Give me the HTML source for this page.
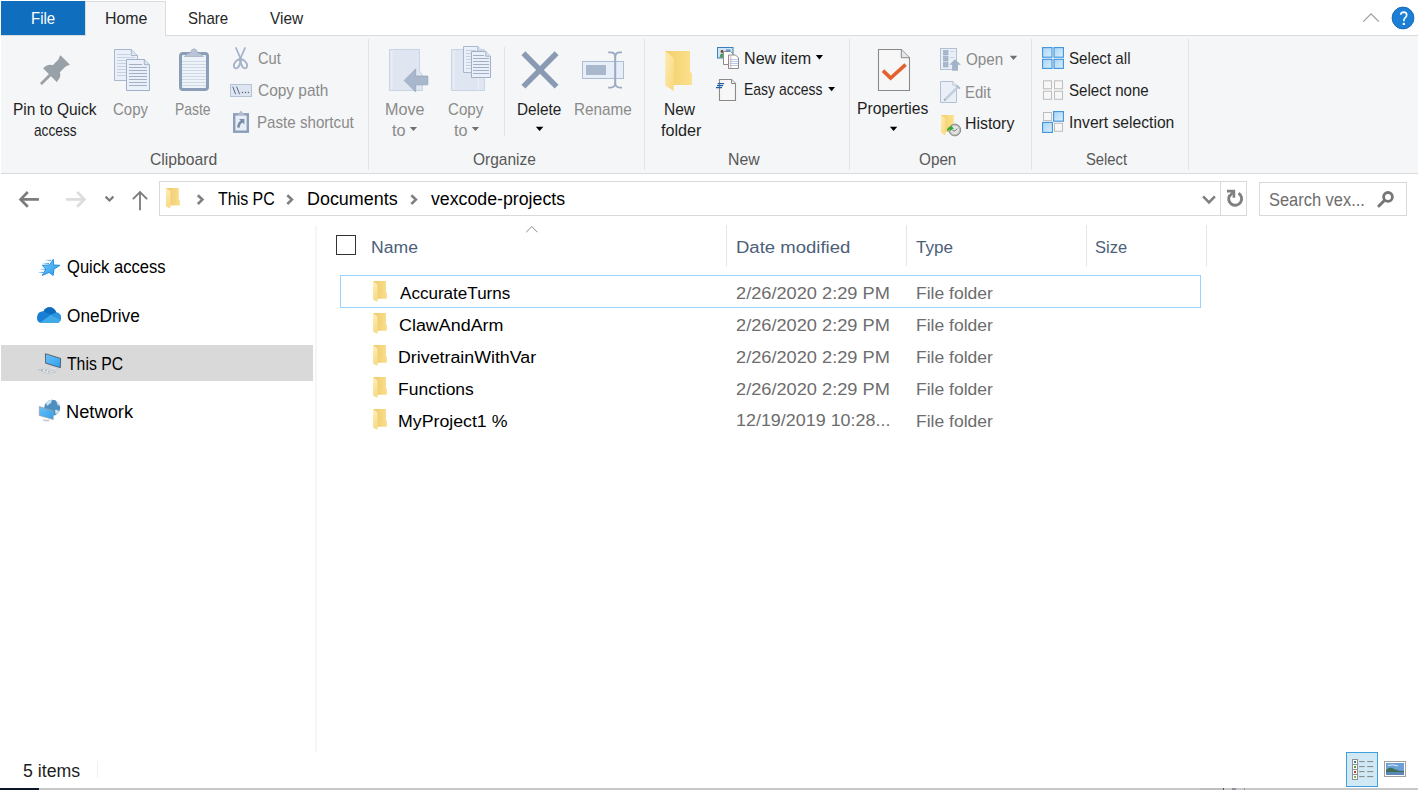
<!DOCTYPE html>
<html><head><meta charset="utf-8"><style>
html,body{margin:0;padding:0;width:1418px;height:790px;overflow:hidden;background:#fff;position:relative;font-family:"Liberation Sans",sans-serif}
.t{position:absolute;white-space:pre;line-height:24px;transform-origin:0 0}
.a{position:absolute}
svg{position:absolute;overflow:visible}
</style></head><body>
<!-- tab row -->
<div class="a" style="left:1px;top:1px;width:84px;height:34px;background:#106ebe"></div>
<div class="a" style="left:85px;top:1px;width:81px;height:35px;background:#f5f6f7;border:1px solid #dadbdc;border-bottom:none;box-sizing:border-box"></div>
<!-- ribbon -->
<div class="a" style="left:1px;top:35px;width:1417px;height:139px;background:#f5f6f7;border-top:1px solid #dadbdc;border-bottom:1px solid #dadbdc;box-sizing:border-box"></div>
<div class="a" style="left:86px;top:35px;width:79px;height:1px;background:#f5f6f7"></div>
<!-- group dividers -->
<div class="a" style="left:368px;top:39px;width:1px;height:131px;background:#e2e3e4"></div>
<div class="a" style="left:644px;top:39px;width:1px;height:131px;background:#e2e3e4"></div>
<div class="a" style="left:849px;top:39px;width:1px;height:131px;background:#e2e3e4"></div>
<div class="a" style="left:1031px;top:39px;width:1px;height:131px;background:#e2e3e4"></div>
<div class="a" style="left:1188px;top:39px;width:1px;height:131px;background:#e2e3e4"></div>
<div class="a" style="left:504px;top:47px;width:1px;height:89px;background:#e2e3e4"></div>
<!-- address bar -->
<div class="a" style="left:159px;top:181px;width:1088px;height:35px;border:1px solid #d9d9d9;box-sizing:border-box"></div>
<div class="a" style="left:1220px;top:182px;width:1px;height:33px;background:#d9d9d9"></div>
<div class="a" style="left:1259px;top:182px;width:148px;height:34px;border:1px solid #d9d9d9;box-sizing:border-box"></div>
<!-- nav -->
<div class="a" style="left:1px;top:345px;width:312px;height:36px;background:#d9d9d9"></div>
<div class="a" style="left:315px;top:225px;width:2px;height:527px;background:#f6f6f6"></div>
<!-- content -->
<div class="a" style="left:336px;top:235px;width:20px;height:20px;border:1.5px solid #333;box-sizing:border-box"></div>
<div class="a" style="left:726px;top:225px;width:1px;height:41px;background:#e5e5e5"></div>
<div class="a" style="left:906px;top:225px;width:1px;height:41px;background:#e5e5e5"></div>
<div class="a" style="left:1086px;top:225px;width:1px;height:41px;background:#e5e5e5"></div>
<div class="a" style="left:1206px;top:225px;width:1px;height:41px;background:#e5e5e5"></div>
<div class="a" style="left:340px;top:275px;width:861px;height:33px;border:1px solid #99d1ff;box-sizing:border-box"></div>
<!-- status -->
<div class="a" style="left:97px;top:761px;width:1px;height:17px;background:#f0f0f0"></div>
<div class="a" style="left:1346px;top:752px;width:32px;height:35px;background:#d1e8f5;border:1px solid #3ea0dd;box-sizing:border-box"></div>
<div class="a" style="left:1384px;top:761px;width:22px;height:16px;border:1px solid #a0a0a0;box-sizing:border-box;background:#fff"></div>
<div class="a" style="left:0;top:788px;width:1418px;height:2px;background:#c8c8c8"></div>
<div class="a" style="left:0;top:788px;width:39px;height:2px;background:#0b1628"></div>
<svg width="1418" height="790" viewBox="0 0 1418 790" style="left:0;top:0">
<defs>
 <linearGradient id="fold" x1="0" y1="0" x2="1" y2="0">
  <stop offset="0" stop-color="#f2cf6c"/><stop offset="1" stop-color="#fbe08c"/>
 </linearGradient>
 <linearGradient id="flap" x1="0" y1="0" x2="1" y2="1">
  <stop offset="0" stop-color="#feebb0"/><stop offset="1" stop-color="#f8d97f"/>
 </linearGradient>
 <linearGradient id="selb" x1="0" y1="0" x2="1" y2="1">
  <stop offset="0" stop-color="#a9d5f7"/><stop offset="1" stop-color="#d9eefc"/>
 </linearGradient>
</defs>
<!-- help button -->
<circle cx="1403" cy="18" r="10.9" fill="#1b7fd6" stroke="#1465b0" stroke-width="0.9"/>
<path d="M1400.7 14.8 Q1400.9 12.1 1403.8 12.1 Q1406.7 12.2 1406.7 14.9 Q1406.7 16.7 1405 17.8 Q1403.8 18.7 1403.8 21.2" fill="none" stroke="#fff" stroke-width="1.6"/>
<rect x="1402.7" y="22.9" width="2.2" height="2.1" fill="#fff"/>
<!-- collapse chevron -->
<path d="M1363.3 21.6 L1371 13.8 L1378.8 21.6" fill="none" stroke="#999" stroke-width="1.15"/>

<!-- pin -->
<g transform="translate(49.9 75.1) rotate(45)" fill="#99a1a8">
 <path d="M-9.67 0 L9.67 0 C9.67 -3.5 8.6 -7.6 5 -9 L5 -16.8 C5.6 -19 6.6 -20 6.6 -21.5 L-6.6 -21.5 C-6.6 -20 -5.6 -19 -5 -16.8 L-5 -9 C-8.6 -7.6 -9.67 -3.5 -9.67 0 Z"/>
 <path d="M-1.5 -0.5 L1.5 -0.5 L1.4 12.2 Q0 13.8 -1.4 12.2 Z"/>
</g>

<!-- copy (clipboard group) -->
<g>
 <path d="M114.5 49.5 H131.3 L137.5 55.5 V80.5 H114.5 Z" fill="#eaf0f9" stroke="#a9b7cc"/>
 <path d="M131.3 49.5 V55.5 H137.5" fill="#dde4ee" stroke="#a9b7cc"/>
 <g stroke="#c7d1df" stroke-width="1">
  <path d="M117 54.5H130 M117 57.5H135 M117 60.5H135 M117 63.5H135 M117 66.5H135 M117 69.5H135 M117 72.5H135 M117 75.5H135"/>
 </g>
 <path d="M126.5 59.5 H144.3 L149.5 64.7 V90.5 H126.5 Z" fill="#eaf0f9" stroke="#a1b0c6"/>
 <path d="M144.3 59.5 V64.7 H149.5" fill="#dde4ee" stroke="#a1b0c6"/>
 <g stroke="#a3b0c4" stroke-width="1">
  <path d="M129 64.5H142 M129 67.5H147 M129 70.5H147 M129 73.5H147 M129 76.5H147 M129 79.5H147 M129 82.5H147 M129 85.5H147"/>
 </g>
</g>
<!-- paste -->
<g>
 <rect x="180.5" y="53.5" width="27" height="36" rx="2.5" fill="#eef2f9" stroke="#8c9db7" stroke-width="3"/>
 <g stroke="#cfd8e5" stroke-width="1">
  <path d="M182 61.5H206 M182 64.5H206 M182 67.5H206 M182 70.5H206 M182 73.5H206 M182 76.5H206 M182 79.5H206 M182 82.5H206 M182 85.5H206"/>
 </g>
 <path d="M184.5 56.5 Q186 54 190.5 53 L191.5 50 Q194 47.5 196.5 50 L197.5 53 Q202 54 203.5 56.5 Z" fill="#b9c5d6" stroke="#a3b2c7" stroke-width="0.8"/>
</g>
<!-- scissors -->
<g fill="none" stroke="#a4b3ca" stroke-width="1.8" stroke-linecap="round">
 <path d="M236 48 L240.8 59"/>
 <path d="M245 48 L240.2 59"/>
 <path d="M240.4 59 C236.5 59.8 233.6 62.8 233.9 66.3 C234.2 68.6 236.8 69 238.3 67.2 C239.9 65.2 240.6 62 240.4 59 Z"/>
 <path d="M240.6 59 C244.5 59.8 247.4 62.8 247.1 66.3 C246.8 68.6 244.2 69 242.7 67.2 C241.1 65.2 240.4 62 240.6 59 Z"/>
</g>
<!-- copy path -->
<g>
 <rect x="230.5" y="84.5" width="21" height="12" fill="#dde5f0" stroke="#b6c3d6"/>
 <path d="M232.8 86.6 L235.6 94.2 M236.6 86.6 L239.6 94.2" stroke="#56698a" stroke-width="1"/>
 <rect x="241.8" y="91.8" width="1.3" height="1.3" fill="#56698a"/>
 <rect x="244.8" y="91.8" width="1.3" height="1.3" fill="#56698a"/>
 <rect x="247.8" y="91.8" width="1.3" height="1.3" fill="#56698a"/>
</g>
<!-- paste shortcut -->
<g>
 <rect x="234.2" y="114.3" width="13.6" height="17.4" fill="#e8eef7" stroke="#8c9db7" stroke-width="2.4"/>
 <path d="M237.5 115 L241 110.5 L244.5 115 Z" fill="#b0bdd0"/>
 <path d="M239 119 H244.4 V124.4 Z" fill="#7b8ea9"/><path d="M242.3 121.3 Q238.6 123 238.4 127.6" fill="none" stroke="#7b8ea9" stroke-width="2.6"/>
</g>

<!-- move to -->
<g>
 <path d="M389.5 49.5 H419.5 V71.5 L422.5 74.5 V90.5 H389.5 Z" fill="#dfe6f1" stroke="#c9d4e4"/>
 <path d="M391.8 51 V89.5" stroke="#eef2f8" stroke-width="1"/>
 <path d="M404.2 80.4 L415.7 69 V76.1 H427.8 V84.8 H415.7 V92 Z" fill="#a9b7cc" stroke="#94a5be" stroke-width="0.8"/>
</g>
<!-- copy to -->
<g>
 <path d="M451.5 49.5 H484.5 V90.5 H451.5 Z" fill="#dfe6f1" stroke="#c9d4e4"/>
 <path d="M453.8 51 V89.5 M478.3 72 V89.5" stroke="#eef2f8" stroke-width="1"/>
 <path d="M463.5 46.5 H477.8 L482.5 51.2 V72.5 H463.5 Z" fill="#eaf0f9" stroke="#a9b7cc"/><path d="M477.8 46.5 V51.2 H482.5" fill="#dde4ee" stroke="#a9b7cc"/>
 <g stroke="#c7d1df"><path d="M466 50.5H476 M466 53.5H480 M466 56.5H480 M466 59.5H480 M466 62.5H480 M466 65.5H480 M466 68.5H480"/></g>
 <path d="M471.5 51.5 H485.8 L490.5 56.2 V77.5 H471.5 Z" fill="#eaf0f9" stroke="#a1b0c6"/>
 <path d="M485.8 51.5 V56.2 H490.5" fill="#dde4ee" stroke="#a1b0c6"/>
 <g stroke="#a3b0c4"><path d="M473 55.5H484 M473 58.5H489 M473 61.5H489 M473 64.5H489 M473 67.5H489 M473 70.5H489 M473 73.5H489"/></g>
</g>
<!-- delete X -->
<path d="M523.4 53.2 L556.6 86.6 M556.6 53.2 L523.4 86.6" stroke="#8a9ab3" stroke-width="5.5"/>
<!-- rename -->
<g>
 <rect x="582.5" y="61.5" width="41" height="17" fill="#e8eef8" stroke="#adbdd3"/>
 <rect x="586" y="65" width="20" height="10" fill="#a9b8cd"/>
 <path d="M615.2 54 V86" stroke="#9aaac2" stroke-width="2"/>
 <path d="M608.2 52.4 H610.5 Q615.2 52.4 615.2 57 Q615.2 52.4 620 52.4 H622" fill="none" stroke="#9aaac2" stroke-width="1.6"/>
 <path d="M608.2 87.6 H610.5 Q615.2 87.6 615.2 83 Q615.2 87.6 620 87.6 H622" fill="none" stroke="#9aaac2" stroke-width="1.6"/>
</g>
<!-- dropdown arrows -->
<path d="M409.8 126.9 H417.1 L413.45 131 Z" fill="#707070"/>
<path d="M471.8 126.9 H479.1 L475.45 131 Z" fill="#707070"/>
<path d="M535.8 126.8 H543.4 L539.6 131 Z" fill="#000"/>
<path d="M815.8 55 H823 L819.4 59.4 Z" fill="#000"/>
<path d="M828.2 87 H835 L831.6 91.2 Z" fill="#000"/>
<path d="M889.9 126.8 H897.3 L893.6 131.1 Z" fill="#000"/>
<path d="M1009.8 55.8 H1017.2 L1013.5 60.1 Z" fill="#707070"/>

<!-- new folder -->
<g>
 <path d="M665.2 51 H690 V71.7 L691.9 73.5 V85 H672.5 Z" fill="url(#fold)"/>
 <path d="M665.2 51 L673.7 57.7 V91.1 L665.2 85.4 Z" fill="url(#flap)"/>
</g>
<!-- new item -->
<g>
 <rect x="717.5" y="47.5" width="15.5" height="10.5" fill="#cfe4f6" stroke="#3d7fb8" stroke-width="1"/>
 <circle cx="722" cy="51.5" r="1.4" fill="#6b4a2a"/>
 <path d="M719.6 57.5 Q720 53.5 722 53.5 Q724 53.5 724.4 57.5 Z" fill="#4a9a5a"/>
 <path d="M726 50.2 H730.5" stroke="#3d7fb8" stroke-width="1.2"/>
 <path d="M723.5 51.5 H730.5 L733 54 V64.5 H723.5 Z" fill="#fff" stroke="#8c8c8c"/>
 <path d="M728.5 55 H735.5 L738.5 58 V68.5 H728.5 Z" fill="#fff" stroke="#8c8c8c"/>
 <path d="M729.5 59.5H738 M729.5 61.5H738 M729.5 63.5H738 M729.5 65.5H738" stroke="#a9c6e6" stroke-width="0.9"/>
 <path d="M730.8 55.5 V68" stroke="#e79a9a" stroke-width="0.8"/>
</g>
<!-- easy access -->
<g>
 <path d="M719.5 79.5 H731.5 L735.5 83.5 V100.5 H719.5 Z" fill="#f7f7f7" stroke="#8a8a8a" stroke-width="1.1"/>
 <path d="M731.5 79.5 V83.5 H735.5" fill="#e8e8e8" stroke="#8a8a8a" stroke-width="1"/>
 <path d="M717.7 83.6 H724 M717 85.6 H723 M716 87.6 H722" stroke="#1d5fa8" stroke-width="1.1"/>
</g>
<!-- properties -->
<g>
 <path d="M878.5 49.5 H901.3 L909.5 57.7 V90.5 H878.5 Z" fill="#f7f7f7" stroke="#8a8a8a" stroke-width="1.1"/>
 <path d="M901.3 49.5 V57.7 H909.5" fill="#e6e6e6" stroke="#8a8a8a" stroke-width="1"/>
 <path d="M883 70.6 L890.6 78 L905.6 64.6" fill="none" stroke="#e2612c" stroke-width="3.6"/>
</g>
<!-- open -->
<g>
 <rect x="940.5" y="48.5" width="16" height="21" fill="#e9eef7" stroke="#b3c0d4"/>
 <rect x="943.5" y="50.5" width="4.5" height="4.5" fill="#a9b7cc" stroke="#98a8bf" stroke-width="0.6"/>
 <rect x="943.5" y="56.5" width="4.5" height="4.5" fill="#a9b7cc" stroke="#98a8bf" stroke-width="0.6"/>
 <rect x="943.5" y="62.5" width="4.5" height="4.5" fill="#a9b7cc" stroke="#98a8bf" stroke-width="0.6"/>
 <path d="M950 51.5H954.6 M950 57.5H954.6" stroke="#c9d3e2" stroke-width="0.9"/>
 <path d="M955 59.2 L960.9 64.7 H958 V70.7 H952.1 V64.7 H949.3 Z" fill="#a3b2c8"/>
</g>
<!-- edit -->
<g>
 <path d="M940.5 81.5 H952.9 L956.5 85.1 V102.5 H940.5 Z" fill="#e9eef7" stroke="#b3c0d4"/>
 <path d="M952.9 81.5 V85.1 H956.5" fill="#f4f7fb" stroke="#b3c0d4"/>
 <path d="M944.6 100.1 L958.2 86.6" stroke="#c3cddb" stroke-width="2.6"/>
 <path d="M956.6 85.4 L960 88.6" stroke="#a9b6c9" stroke-width="1.6"/>
 <path d="M943.8 100.9 L944.6 98.8 L945.8 100 Z" fill="#8a98ad"/>
</g>
<!-- history -->
<g>
 <path d="M941 115 H953.8 V132 H941 Z" fill="url(#fold)"/>
 <path d="M941 115 L945.4 118.2 V135.4 L941 132.4 Z" fill="url(#flap)"/>
 <circle cx="954.8" cy="130" r="5.9" fill="#bdbdbd" stroke="#8c8c8c" stroke-width="1"/>
 <circle cx="954.8" cy="130" r="4.2" fill="#e4e4e4"/>
 <path d="M952.6 130.6 L954.8 131 L957.2 128.6" fill="none" stroke="#555" stroke-width="0.8"/>
 <path d="M947 129.2 Q948.4 126.6 951 126.8 L950.6 125.2 L953.8 128.4 L950 131 L950.4 129.3 Q948.8 129.2 947.4 131.5 Z" fill="#2fa62f"/>
</g>
<!-- select all -->
<g stroke="#3d93dd" stroke-width="1.1" fill="url(#selb)">
 <rect x="1042.6" y="47.6" width="9.4" height="9.6"/>
 <rect x="1054" y="47.6" width="9.4" height="9.6"/>
 <rect x="1042.6" y="59.3" width="9.4" height="9.1"/>
 <rect x="1054" y="59.3" width="9.4" height="9.1"/>
</g>
<!-- select none -->
<g stroke="#bdbdbd" stroke-width="1" fill="#f7f7f7">
 <rect x="1043.5" y="80.8" width="8" height="8"/>
 <rect x="1054.5" y="80.8" width="8" height="8"/>
 <rect x="1043.5" y="91.3" width="8" height="8"/>
 <rect x="1054.5" y="91.3" width="8" height="8"/>
</g>
<!-- invert selection -->
<g>
 <rect x="1043.5" y="112.5" width="8" height="8" fill="#f7f7f7" stroke="#bdbdbd"/>
 <rect x="1054.5" y="123.3" width="8" height="8" fill="#f7f7f7" stroke="#bdbdbd"/>
 <rect x="1053.6" y="111.6" width="9.8" height="9.6" fill="url(#selb)" stroke="#3d93dd" stroke-width="1.1"/>
 <rect x="1042.6" y="122.4" width="9.8" height="10" fill="url(#selb)" stroke="#3d93dd" stroke-width="1.1"/>
</g>
</svg>
<svg width="1418" height="790" viewBox="0 0 1418 790" style="left:0;top:0">
<defs>
 <linearGradient id="fb" x1="0" y1="0" x2="1" y2="0">
  <stop offset="0" stop-color="#efc96a"/><stop offset="1" stop-color="#f9de8e"/>
 </linearGradient>
 <linearGradient id="ff" x1="0" y1="0" x2="0" y2="1">
  <stop offset="0" stop-color="#feecb4"/><stop offset="1" stop-color="#f7da86"/>
 </linearGradient>
 <symbol id="fold16" viewBox="0 0 14 21">
  <path d="M0 0 H12.8 V11.1 L13.8 12 V17.6 H3.9 Z" fill="url(#fb)"/>
  <path d="M0 0 L4.4 3.3 V20.6 L0 18.6 Z" fill="url(#ff)"/>
 </symbol>
 <linearGradient id="star" x1="0" y1="0" x2="1" y2="1">
  <stop offset="0" stop-color="#6cc6fa"/><stop offset="1" stop-color="#2e9be9"/>
 </linearGradient>
 <linearGradient id="speed" x1="0" y1="0" x2="1" y2="0">
  <stop offset="0" stop-color="#3a9ae6" stop-opacity="0"/><stop offset="1" stop-color="#3a9ae6" stop-opacity="1"/>
 </linearGradient>
 <linearGradient id="scr" x1="0" y1="0" x2="1" y2="1">
  <stop offset="0" stop-color="#6cc0f7"/><stop offset="1" stop-color="#2fa0ee"/>
 </linearGradient>
</defs>
<!-- back / forward -->
<g fill="none" stroke="#7b7b7b" stroke-width="2.7">
 <path d="M21.2 199.4 H38.9"/>
 <path d="M27.8 192 L20.6 199.4 L27.8 206.8"/>
</g>
<g fill="none" stroke="#dcdcdc" stroke-width="2.7">
 <path d="M66 199.4 H83.7"/>
 <path d="M77.2 192 L84.4 199.4 L77.2 206.8"/>
</g>
<path d="M105.6 196.6 L109.5 200.5 L113.4 196.6" fill="none" stroke="#7b7b7b" stroke-width="2.2"/>
<g fill="none" stroke="#7b7b7b" stroke-width="1.8">
 <path d="M140 192 V210.2"/>
 <path d="M132.9 199.1 L140 192 L147.1 199.1"/>
</g>
<!-- address folder -->
<use href="#fold16" x="166" y="188" width="14" height="21"/>
<!-- breadcrumb chevrons -->
<g fill="none" stroke="#808080" stroke-width="2.6">
 <path d="M197.8 195.2 L202.4 199.6 L197.8 204"/>
 <path d="M287.3 195.2 L291.9 199.6 L287.3 204"/>
 <path d="M411.3 195.2 L415.9 199.6 L411.3 204"/>
</g>
<!-- dropdown -->
<path d="M1203.1 196.4 L1209 202.3 L1214.9 196.4" fill="none" stroke="#808080" stroke-width="2.6"/>
<!-- refresh -->
<g fill="none" stroke="#808080" stroke-width="2.9">
 <path d="M1238.5 193.2 A6.5 6.5 0 1 1 1229.7 195.2"/>
</g>
<path d="M1227 189.8 H1235.2 V197.8 H1232.6 V192.4 H1227 Z" fill="#808080"/>
<path d="M1229.2 196.6 L1233.5 191.6" stroke="#808080" stroke-width="2.6"/>
<!-- search -->
<circle cx="1388" cy="196.9" r="4.4" fill="none" stroke="#767676" stroke-width="2.8"/>
<path d="M1384.4 200.5 L1378.9 206" stroke="#767676" stroke-width="3" stroke-linecap="round"/>

<!-- quick access star -->
<g>
 <rect x="44.5" y="259.8" width="6.5" height="1.1" fill="url(#speed)"/><rect x="41.8" y="262.9" width="7.2" height="1.1" fill="url(#speed)"/><rect x="38.8" y="268.8" width="7" height="1.1" fill="url(#speed)"/><rect x="37.5" y="271.9" width="5.6" height="1.1" fill="url(#speed)"/>
 <path d="M53.2 259.3 L53.7 265 L60 265.3 L54 269.1 L53.1 275.5 L49.1 272.4 L42.2 275.5 L45.8 269.1 L42.2 265.3 L49.5 264.9 Z" fill="url(#star)" stroke="#1f88d9" stroke-width="0.9" stroke-linejoin="round"/>
</g>
<!-- onedrive -->
<g>
 <path d="M40 322.8 Q36.8 321.5 37 317.5 Q37.5 311 43.5 311.2 Q45.5 307.2 49.5 307.2 Q54.5 307.3 56.3 312.6 Q61.2 313.3 61 318.2 Q60.6 322.6 57 322.8 Z" fill="#1a7fd4"/>
 <path d="M43.5 311.2 Q45.5 307.2 49.5 307.2 Q54.5 307.3 56.3 312.6 L50.8 314.8 Z" fill="#0f6cbd"/>
 <path d="M50.8 314.8 L56.3 312.6 Q61.2 313.3 61 318.2 L60.6 319.8 Z" fill="#2d95e0"/>
 <path d="M40 322.8 L50.8 314.8 L60.6 319.8 Q60 322.6 57 322.8 Z" fill="#40a9e8"/>
</g>
<!-- this pc -->
<g>
 <path d="M48.5 366.5 L56 367.5 L58.5 369.5 L51 368.8 Z" fill="#e9ecef" stroke="#b8c0c8" stroke-width="0.5"/>
 <path d="M38.2 369.6 L46 369 L55.6 372 L48 373.6 Z" fill="#e6e9ec" stroke="#aab2ba" stroke-width="0.5"/>
 <path d="M41 370.2 L43 370.1 M45 370.8 L47 370.7 M48 371.8 L50 371.7" stroke="#7a848e" stroke-width="0.7"/>
 <path d="M45.4 353.7 L60.6 358.4 L60.4 367.7 L45.6 363.2 Z" fill="url(#scr)" stroke="#3a3f44" stroke-width="0.7"/>
</g>
<!-- network -->
<g>
 <circle cx="52.2" cy="407.8" r="8" fill="#4f8fbf"/>
 <path d="M46 402 Q49 399.5 52 400 L51 403 Q48.5 404.5 47 406 Z M56 400.5 Q59.5 402.5 60 406 L57.5 405 Z M55 410 Q57.5 409 59.5 412 Q57.5 414.5 55.5 414 Z" fill="#d7ebf5" opacity="0.9"/>
 <path d="M39.3 406.6 L53.4 410.8 L53.2 419.4 L39.3 415.4 Z" fill="url(#scr)" stroke="#9a9a9a" stroke-width="0.7"/>
 <path d="M42.4 419.4 L50 419.8 L48.5 421.6 L44 421.2 Z" fill="#c8ccd0"/>
</g>

<!-- content folders -->
<use href="#fold16" x="373.1" y="281.1" width="14" height="21"/>
<use href="#fold16" x="373.1" y="313.1" width="14" height="21"/>
<use href="#fold16" x="373.1" y="345.1" width="14" height="21"/>
<use href="#fold16" x="373.1" y="377.1" width="14" height="21"/>
<use href="#fold16" x="373.1" y="409.1" width="14" height="21"/>
<!-- sort caret -->
<path d="M526.2 232.2 L531.8 226.6 L537.4 232.2" fill="none" stroke="#8a8a8a" stroke-width="1"/>

<!-- details view icon -->
<g>
 <rect x="1352.5" y="759.5" width="5" height="20" fill="#fff" stroke="#8f8f8f" stroke-width="1"/>
 <path d="M1352.5 764.5 H1357.5 M1352.5 769.5 H1357.5 M1352.5 774.5 H1357.5" stroke="#8f8f8f" stroke-width="1"/>
 <rect x="1354" y="761" width="2" height="2" fill="#3a7a9a"/>
 <rect x="1354" y="766" width="2" height="2" fill="#5a9a3a"/>
 <rect x="1354" y="771" width="2" height="2" fill="#c03a2a"/>
 <rect x="1354" y="776" width="2" height="2" fill="#8aaa5a"/>
 <path d="M1359.2 761.6 H1364.6 M1367.2 761.6 H1373.2 M1359.2 766.6 H1364.6 M1367.2 766.6 H1373.2 M1359.2 771.6 H1364.6 M1367.2 771.6 H1373.2 M1359.2 776.6 H1364.6 M1367.2 776.6 H1373.2" stroke="#7a7a7a" stroke-width="0.9"/>
</g>
<!-- large icons -->
<g>
 <rect x="1386" y="763" width="18" height="12" fill="#6a9fd8"/>
 <path d="M1386 770 Q1390 766 1394 769 Q1399 771.5 1404 771 V775 H1386 Z" fill="#3f6e52"/>
 <rect x="1386" y="772" width="18" height="3" fill="#5a86b8"/>
 <path d="M1388 765.5 Q1393 764 1398 766" stroke="#e4eef8" stroke-width="1" fill="none"/>
</g>
<rect x="1200" y="788" width="23" height="2" fill="#b8b8b8" opacity="0.6"/>
<rect x="1223" y="788" width="1" height="2" fill="#555"/>
<rect x="1232" y="788" width="4" height="2" fill="#8a93a0"/>
<rect x="1244" y="788" width="1" height="2" fill="#999"/>
</svg>

<div class="t" style="left:31.15px;top:7.00px;font-size:15.7px;color:#ffffff;transform:scaleX(0.9542)">File</div>
<div class="t" style="left:104.89px;top:7.00px;font-size:15.7px;color:#262626;transform:scaleX(1.0150)">Home</div>
<div class="t" style="left:187.54px;top:7.00px;font-size:15.7px;color:#262626;transform:scaleX(0.9585)">Share</div>
<div class="t" style="left:269.60px;top:7.00px;font-size:15.7px;color:#262626;transform:scaleX(0.9824)">View</div>
<div class="t" style="left:13.01px;top:97.90px;font-size:15.7px;color:#1f1f1f;transform:scaleX(0.9869)">Pin to Quick</div>
<div class="t" style="left:33.80px;top:118.60px;font-size:15.7px;color:#1f1f1f;transform:scaleX(0.8735)">access</div>
<div class="t" style="left:113.30px;top:97.60px;font-size:15.7px;color:#8a8a8a;transform:scaleX(0.9541)">Copy</div>
<div class="t" style="left:174.91px;top:97.60px;font-size:15.7px;color:#8a8a8a;transform:scaleX(0.8872)">Paste</div>
<div class="t" style="left:257.70px;top:46.80px;font-size:15.7px;color:#8a8a8a;transform:scaleX(0.9320)">Cut</div>
<div class="t" style="left:257.70px;top:79.20px;font-size:15.7px;color:#8a8a8a;transform:scaleX(0.9845)">Copy path</div>
<div class="t" style="left:256.74px;top:110.60px;font-size:15.7px;color:#8a8a8a;transform:scaleX(0.9650)">Paste shortcut</div>
<div class="t" style="left:150.40px;top:148.20px;font-size:15.7px;color:#585858;transform:scaleX(1.0030)">Clipboard</div>
<div class="t" style="left:384.67px;top:97.60px;font-size:15.7px;color:#8a8a8a;transform:scaleX(1.0297)">Move</div>
<div class="t" style="left:392.20px;top:118.60px;font-size:15.7px;color:#8a8a8a;transform:scaleX(1.0308)">to</div>
<div class="t" style="left:448.20px;top:97.60px;font-size:15.7px;color:#8a8a8a;transform:scaleX(0.9622)">Copy</div>
<div class="t" style="left:454.20px;top:118.60px;font-size:15.7px;color:#8a8a8a;transform:scaleX(1.0308)">to</div>
<div class="t" style="left:516.52px;top:97.60px;font-size:15.7px;color:#1f1f1f;transform:scaleX(0.9773)">Delete</div>
<div class="t" style="left:573.63px;top:97.60px;font-size:15.7px;color:#8a8a8a;transform:scaleX(0.9724)">Rename</div>
<div class="t" style="left:473.20px;top:148.20px;font-size:15.7px;color:#585858;transform:scaleX(0.9873)">Organize</div>
<div class="t" style="left:663.81px;top:97.50px;font-size:15.7px;color:#1f1f1f;transform:scaleX(0.9903)">New</div>
<div class="t" style="left:660.60px;top:118.60px;font-size:15.7px;color:#1f1f1f;transform:scaleX(1.0308)">folder</div>
<div class="t" style="left:743.67px;top:46.60px;font-size:15.7px;color:#1f1f1f;transform:scaleX(1.0266)">New item</div>
<div class="t" style="left:743.81px;top:78.40px;font-size:15.7px;color:#1f1f1f;transform:scaleX(0.8920)">Easy access</div>
<div class="t" style="left:728.29px;top:148.10px;font-size:15.7px;color:#585858;transform:scaleX(1.0097)">New</div>
<div class="t" style="left:857.40px;top:97.40px;font-size:15.7px;color:#1f1f1f;transform:scaleX(0.9986)">Properties</div>
<div class="t" style="left:965.60px;top:47.80px;font-size:15.7px;color:#8a8a8a;transform:scaleX(0.9684)">Open</div>
<div class="t" style="left:965.05px;top:80.60px;font-size:15.7px;color:#8a8a8a;transform:scaleX(0.9538)">Edit</div>
<div class="t" style="left:964.99px;top:112.10px;font-size:15.7px;color:#1f1f1f;transform:scaleX(1.0104)">History</div>
<div class="t" style="left:919.30px;top:148.10px;font-size:15.7px;color:#585858;transform:scaleX(0.9737)">Open</div>
<div class="t" style="left:1068.63px;top:46.70px;font-size:15.7px;color:#1f1f1f;transform:scaleX(0.9661)">Select all</div>
<div class="t" style="left:1068.64px;top:78.70px;font-size:15.7px;color:#1f1f1f;transform:scaleX(0.9622)">Select none</div>
<div class="t" style="left:1068.60px;top:110.70px;font-size:15.7px;color:#1f1f1f;transform:scaleX(0.9981)">Invert selection</div>
<div class="t" style="left:1086.26px;top:148.10px;font-size:15.7px;color:#585858;transform:scaleX(0.9419)">Select</div>
<div class="t" style="left:217.50px;top:186.85px;font-size:18.0px;color:#000000;transform:scaleX(0.8873)">This PC</div>
<div class="t" style="left:307.00px;top:186.85px;font-size:18.0px;color:#000000;transform:scaleX(0.9956)">Documents</div>
<div class="t" style="left:431.30px;top:186.85px;font-size:18.0px;color:#000000;transform:scaleX(0.9853)">vexcode-projects</div>
<div class="t" style="left:1269.49px;top:187.50px;font-size:18.0px;color:#6d6d6d;transform:scaleX(0.9126)">Search vex...</div>
<div class="t" style="left:66.80px;top:255.40px;font-size:17.5px;color:#000000;transform:scaleX(0.9471)">Quick access</div>
<div class="t" style="left:66.70px;top:303.90px;font-size:17.5px;color:#000000;transform:scaleX(0.9851)">OneDrive</div>
<div class="t" style="left:66.80px;top:351.90px;font-size:17.5px;color:#000000;transform:scaleX(0.9000)">This PC</div>
<div class="t" style="left:65.76px;top:399.60px;font-size:17.5px;color:#000000;transform:scaleX(1.0444)">Network</div>
<div class="t" style="left:370.68px;top:234.60px;font-size:17.3px;color:#4c607a;transform:scaleX(1.0178)">Name</div>
<div class="t" style="left:735.63px;top:235.00px;font-size:17.3px;color:#4c607a;transform:scaleX(1.0714)">Date modified</div>
<div class="t" style="left:916.40px;top:235.00px;font-size:17.3px;color:#4c607a;transform:scaleX(0.9892)">Type</div>
<div class="t" style="left:1095.05px;top:235.00px;font-size:17.3px;color:#4c607a;transform:scaleX(0.9531)">Size</div>
<div class="t" style="left:399.60px;top:280.50px;font-size:17.3px;color:#000000;transform:scaleX(0.9874)">AccurateTurns</div>
<div class="t" style="left:398.96px;top:312.60px;font-size:17.3px;color:#000000;transform:scaleX(1.0364)">ClawAndArm</div>
<div class="t" style="left:398.47px;top:344.70px;font-size:17.3px;color:#000000;transform:scaleX(1.0301)">DrivetrainWithVar</div>
<div class="t" style="left:398.49px;top:376.80px;font-size:17.3px;color:#000000;transform:scaleX(1.0122)">Functions</div>
<div class="t" style="left:398.47px;top:408.90px;font-size:17.3px;color:#000000;transform:scaleX(1.0267)">MyProject1 %</div>
<div class="t" style="left:735.85px;top:280.60px;font-size:17.3px;color:#6d6d6d;transform:scaleX(1.0535)">2/26/2020 2:29 PM</div>
<div class="t" style="left:735.85px;top:312.60px;font-size:17.3px;color:#6d6d6d;transform:scaleX(1.0535)">2/26/2020 2:29 PM</div>
<div class="t" style="left:735.85px;top:344.60px;font-size:17.3px;color:#6d6d6d;transform:scaleX(1.0535)">2/26/2020 2:29 PM</div>
<div class="t" style="left:735.85px;top:376.60px;font-size:17.3px;color:#6d6d6d;transform:scaleX(1.0535)">2/26/2020 2:29 PM</div>
<div class="t" style="left:736.46px;top:408.40px;font-size:17.3px;color:#6d6d6d;transform:scaleX(1.0367)">12/19/2019 10:28...</div>
<div class="t" style="left:916.19px;top:280.60px;font-size:17.3px;color:#6d6d6d;transform:scaleX(1.0133)">File folder</div>
<div class="t" style="left:916.19px;top:312.60px;font-size:17.3px;color:#6d6d6d;transform:scaleX(1.0133)">File folder</div>
<div class="t" style="left:916.19px;top:344.60px;font-size:17.3px;color:#6d6d6d;transform:scaleX(1.0133)">File folder</div>
<div class="t" style="left:916.19px;top:376.60px;font-size:17.3px;color:#6d6d6d;transform:scaleX(1.0133)">File folder</div>
<div class="t" style="left:916.19px;top:408.60px;font-size:17.3px;color:#6d6d6d;transform:scaleX(1.0133)">File folder</div>
<div class="t" style="left:23.12px;top:759.00px;font-size:18.0px;color:#1e1e1e;transform:scaleX(0.9842)">5 items</div>
</body></html>
